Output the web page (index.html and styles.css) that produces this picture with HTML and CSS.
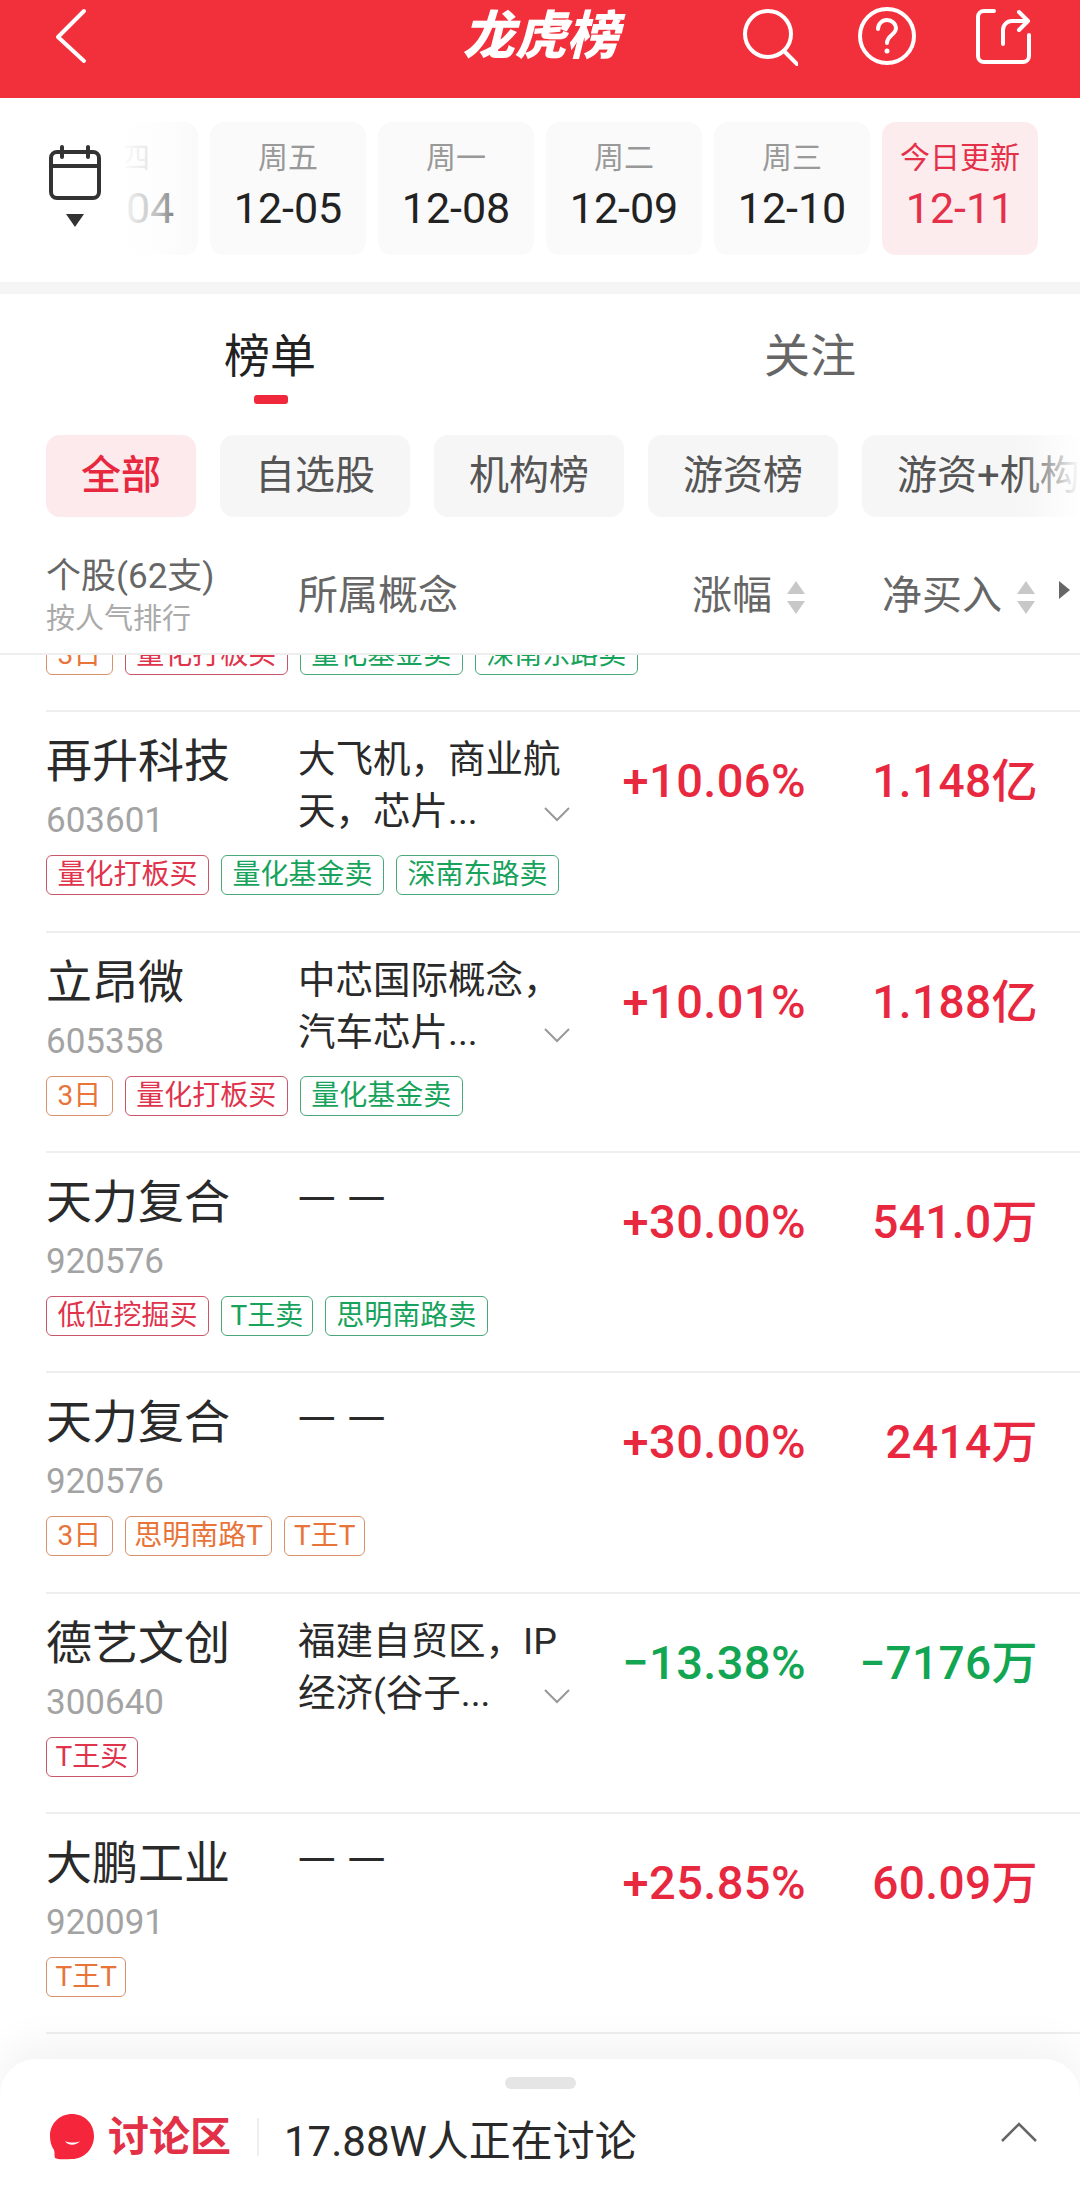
FILE: index.html
```html
<!DOCTYPE html>
<html lang="zh-CN">
<head>
  <meta charset="UTF-8">
  <title>龙虎榜</title>
  <link rel="stylesheet" href="styles.css">
</head>
<body>

<div class="page">
  <header class="top-bar">
    <svg class="back" width="60" height="60" viewBox="0 0 60 60"><path d="M37 5L11 31L37 55"/></svg>
    <h1 class="title">龙虎榜</h1>
    <div class="top-icons">
      <svg width="60" height="60" viewBox="0 0 60 60"><circle cx="30" cy="28" r="23"/><path d="M46 45L59 58"/></svg>
      <svg width="60" height="60" viewBox="0 0 60 60"><circle cx="31" cy="30" r="27"/><path d="M22 23c0-5 4-9 9-9s9 4 9 8c0 7-9 7-9 15"/><circle class="dot" cx="31" cy="45" r="2.5"/></svg>
      <svg width="60" height="60" viewBox="0 0 60 60"><path d="M20 5H10a6 6 0 0 0-6 6V50a6 6 0 0 0 6 6H49a6 6 0 0 0 6-6V29"/><path d="M29 38V24c0-5 4-9 9-9H54M45 6l9 9-9 9"/></svg>
    </div>
  </header>

  <section class="date-strip">
    <div class="calendar">
      <svg width="56" height="56" viewBox="0 0 56 56"><rect x="4" y="7" width="48" height="46" rx="6"/><path d="M4 21H52M15 2V12M41 2V12"/></svg>
      <span class="calendar-arrow"></span>
    </div>
    <div class="dates">
      <div class="date-card"><span class="day">周四</span><span class="date">12-04</span></div>
      <div class="date-card"><span class="day">周五</span><span class="date">12-05</span></div>
      <div class="date-card"><span class="day">周一</span><span class="date">12-08</span></div>
      <div class="date-card"><span class="day">周二</span><span class="date">12-09</span></div>
      <div class="date-card"><span class="day">周三</span><span class="date">12-10</span></div>
      <div class="date-card today"><span class="day">今日更新</span><span class="date">12-11</span></div>
    </div>
  </section>

  <div class="band"></div>

  <nav class="tabs">
    <a class="tab active">榜单</a>
    <a class="tab">关注</a>
  </nav>

  <div class="filters">
    <span class="pill active">全部</span>
    <span class="pill">自选股</span>
    <span class="pill">机构榜</span>
    <span class="pill">游资榜</span>
    <span class="pill">游资+机构榜</span>
  </div>

  <div class="table-head">
    <div class="head-stock">
      <span class="head-count">个股(62支)</span>
      <span class="head-sub">按人气排行</span>
    </div>
    <span class="head-concept">所属概念</span>
    <span class="head-sort head-pct">涨幅<i class="sort"></i></span>
    <span class="head-sort head-net">净买入<i class="sort"></i></span>
    <i class="more"></i>
  </div>

  <div class="stock-list">
    <div class="stock-row scrolled">
      <div class="stock-main"></div>
      <div class="tags">
        <span class="tag tag-t">3日</span><span class="tag tag-buy">量化打板买</span><span class="tag tag-sell">量化基金卖</span><span class="tag tag-sell">深南东路卖</span>
      </div>
    </div>

    <div class="stock-row">
      <div class="stock-main">
        <div class="stock-name"><div class="name">再升科技</div><div class="code">603601</div></div>
        <div class="concept"><span>大飞机，商业航<br>天，芯片...</span><svg class="chevron" width="26" height="15" viewBox="0 0 26 15"><path d="M1 1L13 13L25 1"/></svg></div>
        <div class="pct up">+10.06%</div>
        <div class="net up">1.148亿</div>
      </div>
      <div class="tags">
        <span class="tag tag-buy">量化打板买</span><span class="tag tag-sell">量化基金卖</span><span class="tag tag-sell">深南东路卖</span>
      </div>
    </div>

    <div class="stock-row">
      <div class="stock-main">
        <div class="stock-name"><div class="name">立昂微</div><div class="code">605358</div></div>
        <div class="concept"><span>中芯国际概念，<br>汽车芯片...</span><svg class="chevron" width="26" height="15" viewBox="0 0 26 15"><path d="M1 1L13 13L25 1"/></svg></div>
        <div class="pct up">+10.01%</div>
        <div class="net up">1.188亿</div>
      </div>
      <div class="tags">
        <span class="tag tag-t">3日</span><span class="tag tag-buy">量化打板买</span><span class="tag tag-sell">量化基金卖</span>
      </div>
    </div>

    <div class="stock-row">
      <div class="stock-main">
        <div class="stock-name"><div class="name">天力复合</div><div class="code">920576</div></div>
        <div class="concept empty">一 一</div>
        <div class="pct up">+30.00%</div>
        <div class="net up">541.0万</div>
      </div>
      <div class="tags">
        <span class="tag tag-buy">低位挖掘买</span><span class="tag tag-sell latin">T王卖</span><span class="tag tag-sell">思明南路卖</span>
      </div>
    </div>

    <div class="stock-row">
      <div class="stock-main">
        <div class="stock-name"><div class="name">天力复合</div><div class="code">920576</div></div>
        <div class="concept empty">一 一</div>
        <div class="pct up">+30.00%</div>
        <div class="net up">2414万</div>
      </div>
      <div class="tags">
        <span class="tag tag-t">3日</span><span class="tag tag-t latin">思明南路T</span><span class="tag tag-t latin">T王T</span>
      </div>
    </div>

    <div class="stock-row">
      <div class="stock-main">
        <div class="stock-name"><div class="name">德艺文创</div><div class="code">300640</div></div>
        <div class="concept"><span>福建自贸区，IP<br>经济(谷子...</span><svg class="chevron" width="26" height="15" viewBox="0 0 26 15"><path d="M1 1L13 13L25 1"/></svg></div>
        <div class="pct down">−13.38%</div>
        <div class="net down">−7176万</div>
      </div>
      <div class="tags">
        <span class="tag tag-buy latin">T王买</span>
      </div>
    </div>

    <div class="stock-row">
      <div class="stock-main">
        <div class="stock-name"><div class="name">大鹏工业</div><div class="code">920091</div></div>
        <div class="concept empty">一 一</div>
        <div class="pct up">+25.85%</div>
        <div class="net up">60.09万</div>
      </div>
      <div class="tags">
        <span class="tag tag-t latin">T王T</span>
      </div>
    </div>

    <div class="stock-row"></div>
  </div>

  <!-- discussion sheet sits over the bottom of the list -->
  <div class="sheet">
    <div class="handle"></div>
    <div class="sheet-row">
      <svg class="bubble" width="46" height="48" viewBox="0 0 46 48">
        <path d="M23 1C35 1 45 10 45 23S35 46 23 46C17 46 9 47 6 45C5 42 6 40 5 37C2 33 1 28 1 23C1 10 11 1 23 1Z"/>
        <path class="smile" d="M16 28C19 33 27 33 31 28C28 30 20 30 16 28Z"/>
      </svg>
      <span class="sheet-title">讨论区</span>
      <span class="sheet-count">17.88W人正在讨论</span>
      <svg class="sheet-up" width="36" height="20" viewBox="0 0 36 20"><path d="M1 19L18 2L35 19"/></svg>
    </div>
  </div>
</div>

</body>
</html>
```

FILE: styles.css
```css
* {
  box-sizing: border-box;
}
body {
  margin: 0;
  background: #fff;
  font-family: Roboto, "Noto Sans CJK SC", sans-serif;
  color: #222;
}
.page {
  position: relative;
  width: 1080px;
  height: 2209px;
  overflow: hidden;
  display: flex;
  flex-direction: column;
}

/* red title bar */
.top-bar {
  flex: none;
  height: 98px;
  padding: 0 46px 30px 47px;
  background: #f2303c;
  display: grid;
  grid-template-columns: 1fr auto 1fr;
  align-items: center;
}
.top-bar svg {
  fill: none;
  stroke: #fff;
  stroke-width: 4;
  stroke-linecap: round;
  stroke-linejoin: round;
}
.title {
  margin: 3px 0 0;
  color: #fff;
  font-size: 52px;
  line-height: 68px;
  font-weight: 900;
  font-style: italic;
}
.top-icons {
  display: flex;
  justify-content: flex-end;
  gap: 58px;
}
.top-icons .dot {
  fill: #fff;
  stroke: none;
}

/* date picker strip */
.date-strip {
  flex: none;
  height: 184px;
  padding: 24px 42px 27px 47px;
  display: flex;
}
.calendar {
  flex: none;
  width: 78px;
  padding-top: 23px;
  display: flex;
  flex-direction: column;
  align-items: flex-start;
}
.calendar svg {
  fill: none;
  stroke: #333;
  stroke-width: 4;
  stroke-linecap: round;
}
.calendar-arrow {
  width: 0;
  height: 0;
  margin: 13px 0 0 19px;
  border-left: 9px solid transparent;
  border-right: 9px solid transparent;
  border-top: 13px solid #333;
}
.dates {
  position: relative;
  flex: 1;
  min-width: 0;
  overflow: hidden;
  display: flex;
  justify-content: flex-end;
  gap: 12px;
}
.dates::before {
  content: "";
  position: absolute;
  left: 0;
  top: 0;
  bottom: 0;
  width: 74px;
  background: linear-gradient(to right, rgba(255, 255, 255, 0.95) 0%, rgba(255, 255, 255, 0.7) 45%, rgba(255, 255, 255, 0) 100%);
}
.date-card {
  flex: none;
  width: 156px;
  height: 133px;
  padding-top: 18px;
  background: #fafafa;
  border-radius: 14px;
  display: flex;
  flex-direction: column;
  align-items: center;
}
.day {
  font-size: 30px;
  line-height: 36px;
  color: #999;
}
.date {
  margin-top: 7px;
  font-size: 43px;
  line-height: 50px;
}
.date-card.today {
  background: #fdecee;
}
.today .day,
.today .date {
  color: #e5304a;
}

.band {
  flex: none;
  height: 12px;
  background: #f5f5f5;
}

/* list / watch tabs */
.tabs {
  flex: none;
  height: 110px;
  display: grid;
  grid-template-columns: 1fr 1fr;
}
.tab {
  position: relative;
  text-align: center;
  padding-top: 30px;
  font-size: 46px;
  line-height: 64px;
  color: #666;
}
.tab.active {
  color: #222;
}
.tab.active::after {
  content: "";
  position: absolute;
  left: 254px;
  top: 101px;
  width: 34px;
  height: 9px;
  border-radius: 3px;
  background: #f0283c;
}

/* filter pills */
.filters {
  position: relative;
  flex: none;
  margin-top: 31px;
  height: 82px;
  padding-left: 46px;
  display: flex;
  gap: 24px;
  overflow: hidden;
}
.filters::after {
  content: "";
  position: absolute;
  right: 0;
  top: 0;
  bottom: 0;
  width: 60px;
  background: linear-gradient(to right, rgba(255, 255, 255, 0), #fff);
}
.pill {
  flex: none;
  padding: 0 35px;
  border-radius: 14px;
  background: #f6f6f6;
  font-size: 40px;
  line-height: 82px;
  color: #555;
  white-space: nowrap;
}
.pill.active {
  background: #fdeaec;
  color: #e8283f;
  font-weight: 500;
}

/* table header */
.table-head {
  position: relative;
  z-index: 1;
  flex: none;
  height: 138px;
  padding: 37px 0 0 46px;
  background: #fff;
  border-bottom: 2px solid #eee;
  display: flex;
  align-items: flex-start;
}
.head-stock {
  width: 252px;
  display: flex;
  flex-direction: column;
}
.head-count {
  font-size: 35px;
  line-height: 46px;
  color: #666;
  white-space: nowrap;
}
.head-sub {
  font-size: 29px;
  line-height: 38px;
  color: #aaa;
}
.head-concept,
.head-sort {
  margin-top: 18px;
  font-size: 40px;
  line-height: 48px;
  color: #666;
}
.head-concept {
  width: 394px;
}
.head-sort {
  position: relative;
  display: block;
}
.head-net {
  margin-left: 110px;
}
.sort {
  position: absolute;
  right: -33px;
  top: 9px;
  width: 18px;
  height: 33px;
}
.sort::before,
.sort::after {
  content: "";
  position: absolute;
  left: 0;
  border-left: 9px solid transparent;
  border-right: 9px solid transparent;
}
.sort::before {
  top: 0;
  border-bottom: 13px solid #c8c8c8;
}
.sort::after {
  bottom: 0;
  border-top: 13px solid #c8c8c8;
}
.more {
  position: absolute;
  left: 1059px;
  top: 64px;
  border-top: 9px solid transparent;
  border-bottom: 9px solid transparent;
  border-left: 11px solid #666;
}

/* stock rows */
.stock-list {
  flex: 1;
  min-height: 0;
  overflow: hidden;
}
.stock-row {
  height: 220.33px;
  margin-left: 46px;
  border-top: 2px solid #eee;
}
.stock-row.scrolled {
  margin-top: -165px;
}
.stock-main {
  height: 143px;
  padding-top: 19px;
  display: flex;
}
.stock-name {
  width: 252px;
}
.name {
  font-size: 46px;
  line-height: 60px;
  color: #2a2a2a;
}
.code {
  margin-top: 10px;
  font-size: 35px;
  line-height: 40px;
  color: #a3a3a3;
}
.concept {
  flex: none;
  width: 272px;
  margin-top: 2px;
  display: flex;
  font-size: 37.5px;
  line-height: 52px;
  color: #2a2a2a;
  white-space: nowrap;
}
.concept span {
  flex: none;
  width: 246px;
}
.concept.empty {
  word-spacing: 3px;
}
.chevron {
  flex: none;
  margin-top: 74px;
  fill: none;
  stroke: #999;
  stroke-width: 2;
}
.pct,
.net {
  margin-top: 20px;
  font-size: 46px;
  line-height: 60px;
  font-weight: 500;
  letter-spacing: 0.4px;
  text-align: right;
  white-space: nowrap;
}
.pct {
  width: 236px;
  font-size: 47px;
}
.net {
  width: 232px;
}
.up {
  color: #e8283f;
}
.down {
  color: #12a552;
}
.tags {
  display: flex;
  gap: 12px;
}
.tag {
  height: 40px;
  padding: 0 10.5px;
  border: 1px solid;
  border-radius: 6px;
  font-size: 28px;
  line-height: 37px;
  white-space: nowrap;
}
/* tags holding a Latin T run a little tighter */
.tag.latin {
  padding: 0 8.5px;
}
.tag-buy {
  color: #e0344c;
  border-color: #c9566a;
}
.tag-sell {
  color: #17a35c;
  border-color: #4aa97a;
}
.tag-t {
  color: #e8743a;
  border-color: #d9916a;
}

/* discussion sheet */
.sheet {
  position: absolute;
  left: 0;
  right: 0;
  top: 2059px;
  bottom: 0;
  background: #fff;
  border-radius: 36px 36px 0 0;
  box-shadow: 0 -16px 40px rgba(0, 0, 0, 0.05);
}
.handle {
  width: 71px;
  height: 12px;
  margin: 18px auto 0;
  border-radius: 6px;
  background: #e5e5e5;
}
.sheet-row {
  margin-top: 24px;
  padding: 0 43px 0 49px;
  height: 48px;
  display: flex;
  align-items: center;
}
.bubble {
  flex: none;
  fill: #f5263c;
}
.bubble .smile {
  fill: #fff;
}
.sheet-title {
  margin-left: 13px;
  padding-right: 26px;
  border-right: 2px solid #eee;
  font-size: 41px;
  line-height: 38px;
  font-weight: 700;
  color: #e23047;
}
.sheet-count {
  margin-left: 25px;
  font-size: 42px;
  color: #2a2a2a;
}
.sheet-up {
  margin: 0 0 10px auto;
  fill: none;
  stroke: #666;
  stroke-width: 2.5;
}
```
